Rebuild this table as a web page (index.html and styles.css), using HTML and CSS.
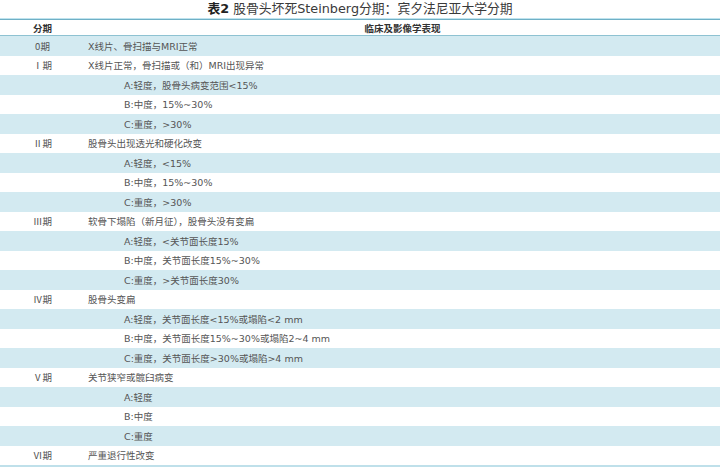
FILE: index.html
```html
<!DOCTYPE html>
<html lang="zh">
<head>
<meta charset="utf-8">
<link rel="stylesheet" href="styles.css">
</head>
<body>
<div class="page">
  <div class="title"><b>表2</b> 股骨头坏死Steinberg分期：宾夕法尼亚大学分期</div>
  <div class="table">
    <div class="row head"><div class="c1">分期</div><div class="c2 center">临床及影像学表现</div></div>
    <div class="row alt"><div class="c1">0期</div><div class="c2">X线片、骨扫描与MRI正常</div></div>
    <div class="row"><div class="c1">Ⅰ期</div><div class="c2">X线片正常，骨扫描或（和）MRI出现异常</div></div>
    <div class="row alt"><div class="c1"></div><div class="c2 sub">A:轻度，股骨头病变范围&lt;15%</div></div>
    <div class="row"><div class="c1"></div><div class="c2 sub">B:中度，15%~30%</div></div>
    <div class="row alt"><div class="c1"></div><div class="c2 sub">C:重度，&gt;30%</div></div>
    <div class="row"><div class="c1">Ⅱ期</div><div class="c2">股骨头出现透光和硬化改变</div></div>
    <div class="row alt"><div class="c1"></div><div class="c2 sub">A:轻度，&lt;15%</div></div>
    <div class="row"><div class="c1"></div><div class="c2 sub">B:中度，15%~30%</div></div>
    <div class="row alt"><div class="c1"></div><div class="c2 sub">C:重度，&gt;30%</div></div>
    <div class="row"><div class="c1">Ⅲ期</div><div class="c2">软骨下塌陷（新月征），股骨头没有变扁</div></div>
    <div class="row alt"><div class="c1"></div><div class="c2 sub">A:轻度，&lt;关节面长度15%</div></div>
    <div class="row"><div class="c1"></div><div class="c2 sub">B:中度，关节面长度15%~30%</div></div>
    <div class="row alt"><div class="c1"></div><div class="c2 sub">C:重度，&gt;关节面长度30%</div></div>
    <div class="row"><div class="c1">Ⅳ期</div><div class="c2">股骨头变扁</div></div>
    <div class="row alt"><div class="c1"></div><div class="c2 sub">A:轻度，关节面长度&lt;15%或塌陷&lt;2 mm</div></div>
    <div class="row"><div class="c1"></div><div class="c2 sub">B:中度，关节面长度15%~30%或塌陷2~4 mm</div></div>
    <div class="row alt"><div class="c1"></div><div class="c2 sub">C:重度，关节面长度&gt;30%或塌陷&gt;4 mm</div></div>
    <div class="row"><div class="c1">Ⅴ期</div><div class="c2">关节狭窄或髋臼病变</div></div>
    <div class="row alt"><div class="c1"></div><div class="c2 sub">A:轻度</div></div>
    <div class="row"><div class="c1"></div><div class="c2 sub">B:中度</div></div>
    <div class="row alt"><div class="c1"></div><div class="c2 sub">C:重度</div></div>
    <div class="row"><div class="c1">Ⅵ期</div><div class="c2">严重退行性改变</div></div>
  </div>
</div>
</body>
</html>
```
FILE: styles.css
```css
html, body {
  margin: 0;
  padding: 0;
  background: #ffffff;
}
.page {
  width: 720px;
  font-family: "DejaVu Sans", "Noto Sans CJK SC", sans-serif;
  color: #555555;
}
.title {
  height: 18px;
  line-height: 17px;
  text-align: center;
  font-size: 12.8px;
  color: #3a3a3a;
}
.title b {
  font-weight: 700;
  color: #222222;
}
.table {
  border-top: 1px solid #bfe3ee;
  border-bottom: 2px solid #bfe0ea;
}
.row {
  display: flex;
  height: 19.5px;
  align-items: center;
  font-size: 9.5px;
}
.row.head {
  height: 15px;
  border-top: 1px solid #6fb0c6;
  border-bottom: 1px solid #8ec2d2;
  font-weight: 700;
  color: #333333;
}
.row.alt {
  background: #d3eaf1;
}
.c1 {
  width: 85px;
  flex: none;
  text-align: center;
  font-family: "Noto Sans CJK SC", sans-serif;
}
.c2 {
  flex: 1;
  padding-left: 3px;
}
.c2.center {
  text-align: center;
  padding-left: 0;
}
.c2.sub {
  padding-left: 39px;
}
```
